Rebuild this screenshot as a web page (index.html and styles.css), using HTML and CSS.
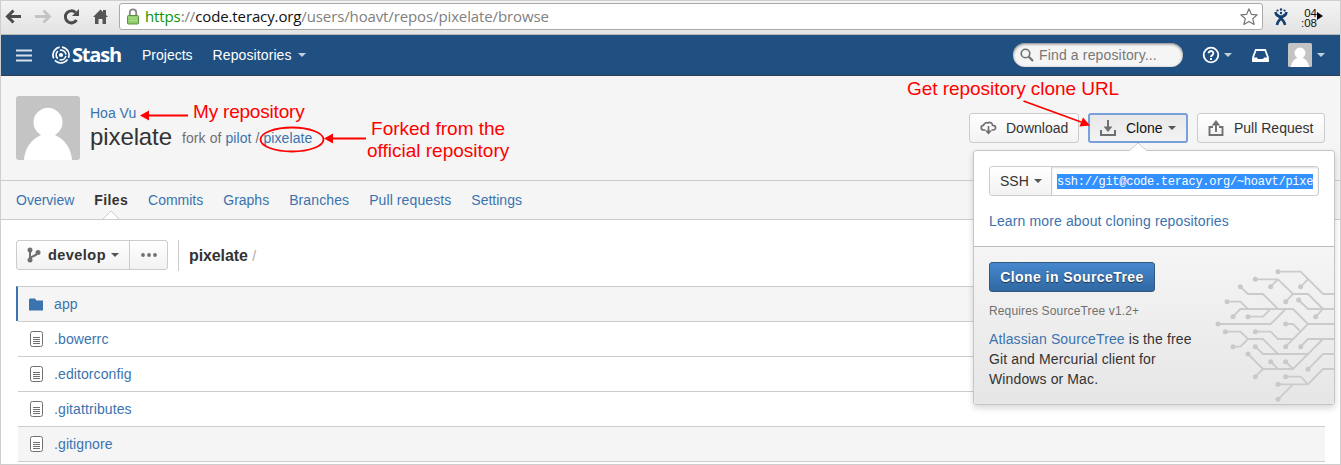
FILE: index.html
```html
<!DOCTYPE html>
<html lang="en">
<head>
<meta charset="utf-8">
<title>pixelate - Stash</title>
<link rel="stylesheet" href="styles.css">
</head>
<body>
<div class="window">
  <div class="toolbar">
    <svg class="nav-icons" width="112" height="34" viewBox="0 0 112 34">
      <path d="M20 15.500H7M12.500 9.500L6.500 15.500L12.500 21.500" fill="none" stroke="#4c4c4c" stroke-width="3"/>
      <path d="M34 15.500h13M42.500 9.500l6 6-6 6" fill="none" stroke="#c3c3c3" stroke-width="2.800"/>
      <path d="M75.500 19a6 6 0 1 1-1-7.500" fill="none" stroke="#4c4c4c" stroke-width="3"/>
      <path d="M78 8v7h-7z" fill="#4c4c4c"/>
      <path d="M92 16L99.500 8.500L102 11V9h3v5l2 2h-2v7h-3.500v-5h-4v5H94v-7z" fill="#555"/>
    </svg>
    <div class="address">
      <svg class="lock" width="12" height="17" viewBox="0 0 12 17">
        <path d="M2.800 8V4.500a3.200 3.200 0 0 1 6.400 0V8" fill="none" stroke="#888" stroke-width="1.800"/>
        <rect x=".5" y="7.500" width="11" height="8.500" rx="1" fill="#8fce6b" stroke="#5c8f43"/>
        <path d="M2 10h8M2 12.500h8" stroke="#aee08f"/>
      </svg>
      <span class="url"><span class="secure">https</span>://<span class="host">code.teracy.org</span>/users/hoavt/repos/pixelate/browse</span>
      <svg class="star" width="20" height="20" viewBox="0 0 20 20"><path d="M10 1.800l2.300 5.500 5.900.5-4.500 3.900 1.400 5.800-5.100-3.100-5.100 3.100 1.400-5.800L1.800 7.800l5.900-.5z" fill="#fff" stroke="#777" stroke-width="1.200" stroke-linejoin="round"/></svg>
    </div>
    <svg class="ext" width="14" height="18" viewBox="0 0 14 18">
      <g fill="#14406f"><circle cx="7" cy="1.500" r="1.200"/><circle cx="3.500" cy="2.500" r="1.100"/><circle cx="10.500" cy="2.500" r="1.100"/><circle cx="7" cy="5" r="1.200"/></g>
      <path d="M1.500 4C2 7 4.500 8.500 7 8.500S12 7 12.500 4M3 17C3.500 12.500 6 11.500 10.500 7M11 17C10.500 12.500 8 11.500 3.500 7" fill="none" stroke="#14406f" stroke-width="2.600"/>
    </svg>
    <div class="timer"><span>04</span><span>:08</span><i></i></div>
  </div>

  <header class="app-header">
    <svg class="menu" width="16" height="13" viewBox="0 0 16 13"><path d="M0 1.500h16M0 6.500h16M0 11.500h16" stroke="#d5dfeb" stroke-width="2"/></svg>
    <svg class="logo" width="18" height="18" viewBox="0 0 18 18" fill="none" stroke="#fff">
      <circle cx="9" cy="9" r="8" stroke-width="1.700" stroke-dasharray="14.500 2.250" transform="rotate(35 9 9)"/>
      <circle cx="9" cy="9" r="4.900" stroke-width="1.600" stroke-dasharray="8.200 2.050" transform="rotate(10 9 9)"/>
      <circle cx="9" cy="9" r="2.100" fill="#fff" stroke="none"/>
    </svg>
    <span class="brand">Stash</span>
    <a class="projects">Projects</a>
    <a class="repos">Repositories</a><i class="caret light"></i>
    <div class="search">
      <svg width="14" height="14" viewBox="0 0 14 14"><circle cx="5.500" cy="5.500" r="4.300" fill="none" stroke="#707070" stroke-width="1.600"/><path d="M8.800 8.800L13 13" stroke="#707070" stroke-width="2.200"/></svg>
      <span>Find a repository...</span>
    </div>
    <svg class="help" width="18" height="18" viewBox="0 0 18 18"><circle cx="9" cy="9" r="7.300" fill="none" stroke="#fff" stroke-width="1.800"/><path d="M6.600 7.300a2.400 2.200 0 1 1 3.700 1.800Q9 9.800 9 11" fill="none" stroke="#fff" stroke-width="1.900"/><rect x="8" y="12" width="2" height="2" fill="#fff"/></svg>
    <i class="caret light"></i>
    <svg class="inbox" width="17" height="13" viewBox="0 0 17 13"><path d="M3.800 1h9.400L16 8.500V12H1V8.500z" fill="none" stroke="#fff" stroke-width="1.800"/><path d="M1 8.500h4l1 1.500h5l1-1.500h4V12H1z" fill="#fff"/></svg>
    <svg class="me" width="24" height="24" viewBox="0 0 64 64"><rect width="64" height="64" rx="4" fill="#c4c4c4"/><path d="M8 64c1-13 8-21 17-25a14.500 14.500 0 1 1 14 0c9 4 16 12 17 25z" fill="#fff"/></svg>
    <i class="caret light"></i>
  </header>

  <section class="repo-header">
    <svg class="avatar" width="64" height="64" viewBox="0 0 64 64"><rect width="64" height="64" rx="3" fill="#c4c4c4"/><path d="M8 64c1-13 8-21 17-25a14.500 14.500 0 1 1 14 0c9 4 16 12 17 25z" fill="#fff"/></svg>
    <div class="identity">
      <a class="owner">Hoa Vu</a>
      <div class="title"><h1>pixelate</h1><span class="fork">fork of <a>pilot</a> / <a>pixelate</a></span></div>
    </div>
    <div class="actions">
      <div class="button download">
        <svg width="17" height="14" viewBox="0 0 17 14" fill="none" stroke="#707070" stroke-width="1.700"><path d="M5.500 9H3.500a2.300 2.300 0 0 1 0-4.600C4 2 6.500 1 8 2c2-1.500 4.500 0 4.500 2.400 4-.2 4 4.600.5 4.600h-1.500M8.500 5v6"/><path d="M5 9.500h7L8.500 13.500z" fill="#707070" stroke="none"/></svg>
        <span>Download</span>
      </div>
      <div class="button clone">
        <svg width="16" height="16" viewBox="0 0 16 16"><path d="M1 10v5h14v-5M8 0v8" fill="none" stroke="#707070" stroke-width="2"/><path d="M3.500 6.500h9L8 12z" fill="#707070"/></svg>
        <span>Clone</span><i class="caret"></i>
        <div class="popup">
          <div class="popup-top">
            <div class="url-group"><div class="protocol">SSH<i class="caret"></i></div><div class="clone-url"><span>ssh://git@code.teracy.org/~hoavt/pixe</span></div></div>
            <a class="learn">Learn more about cloning repositories</a>
          </div>
          <div class="popup-bottom">
            <svg class="circuit" width="124" height="157" viewBox="60 21 372 471">
              <g fill="none" stroke="#cbcbcb" stroke-width="5.500">
                <path d="M264 95H332L399 162H433M332 140L354 118M196 118H264L309 162H354L399 207H433M242 140L264 118M287 185L309 162M151 140L174 162H219L264 207M111 185H151L174 207M129 230L151 207H309L354 252H433M174 230H219L242 207M84 252H242L287 207M326 180L354 207H399L377 230M287 252H309L332 275M287 320L354 252M106 275H151L174 297H219L264 342M129 320H151L174 297M196 275H242L264 297H309M332 320L354 297H433M196 320L219 342H354M174 342L219 387H309L399 297M196 410L219 387M242 365L264 387M287 365L309 387M354 388L399 342H433M287 410H332L354 433M264 433H354L399 387H433M264 478L309 433"/>
              </g>
              <g fill="#c9c9c9"><circle cx="264" cy="95" r="7.500"/><circle cx="332" cy="140" r="7.500"/><circle cx="196" cy="118" r="7.500"/><circle cx="242" cy="140" r="7.500"/><circle cx="287" cy="185" r="7.500"/><circle cx="151" cy="140" r="7.500"/><circle cx="111" cy="185" r="7.500"/><circle cx="129" cy="230" r="7.500"/><circle cx="174" cy="230" r="7.500"/><circle cx="84" cy="252" r="7.500"/><circle cx="326" cy="180" r="7.500"/><circle cx="377" cy="230" r="7.500"/><circle cx="287" cy="252" r="7.500"/><circle cx="287" cy="320" r="7.500"/><circle cx="106" cy="275" r="7.500"/><circle cx="129" cy="320" r="7.500"/><circle cx="196" cy="275" r="7.500"/><circle cx="332" cy="320" r="7.500"/><circle cx="196" cy="320" r="7.500"/><circle cx="174" cy="342" r="7.500"/><circle cx="196" cy="410" r="7.500"/><circle cx="242" cy="365" r="7.500"/><circle cx="287" cy="365" r="7.500"/><circle cx="354" cy="388" r="7.500"/><circle cx="287" cy="410" r="7.500"/><circle cx="264" cy="433" r="7.500"/><circle cx="264" cy="478" r="7.500"/></g>
            </svg>
            <div class="primary">Clone in SourceTree</div>
            <div class="requires">Requires SourceTree v1.2+</div>
            <p><a>Atlassian SourceTree</a> is the free<br>Git and Mercurial client for<br>Windows or Mac.</p>
          </div>
          <svg class="pointer" width="18" height="9" viewBox="0 0 18 9"><path d="M0 9L9 1l9 8" fill="#fff" stroke="#ccc"/></svg>
        </div>
      </div>
      <div class="button pull">
        <svg width="17" height="16" viewBox="0 0 17 16"><path d="M5 7H1.500v8h13V7H11M8 12V4" fill="none" stroke="#707070" stroke-width="1.900"/><path d="M3.700 5.500L8 0l4.300 5.500z" fill="#707070"/></svg>
        <span>Pull Request</span>
      </div>
    </div>
  </section>

  <nav class="tabs">
    <a>Overview</a><a class="active">Files<svg width="18" height="9" viewBox="0 0 18 9"><path d="M1 9l8-8 8 8" fill="#fff" stroke="#ccc"/></svg></a><a>Commits</a><a>Graphs</a><a class="wide">Branches</a><a class="wide">Pull requests</a><a>Settings</a>
  </nav>

  <main>
    <div class="path-bar">
      <div class="branch">
        <div class="branch-name">
          <svg width="14" height="16" viewBox="0 0 14 16" fill="none" stroke="#707070" stroke-width="2"><path d="M3 3v10M3 12c1-4 7-2 8-7" /><g fill="#707070" stroke="none"><circle cx="3" cy="3" r="2.500"/><circle cx="3" cy="13" r="2.500"/><circle cx="11" cy="5.500" r="2.500"/></g></svg>
          <b>develop</b><i class="caret"></i>
        </div>
        <div class="more"><svg width="16" height="4" viewBox="0 0 16 4" fill="#707070"><circle cx="2" cy="2" r="1.900"/><circle cx="8" cy="2" r="1.900"/><circle cx="14" cy="2" r="1.900"/></svg></div>
      </div>
      <div class="crumbs"><b>pixelate</b> <span>/</span></div>
    </div>
    <div class="files">
      <div class="row focused"><svg width="14" height="13" viewBox="0 0 14 13"><path d="M0 12.500V1.500L1 .5h5l1.500 2H14v10z" fill="#3b73af"/></svg><a>app</a></div>
      <div class="row"><svg width="13" height="16" viewBox="0 0 13 16"><rect x=".5" y=".5" width="12" height="15" rx="2" fill="#fff" stroke="#707070"/><path d="M3 6.500h7M3 8.500h7M3 10.500h7M3 12.500h7" stroke="#707070"/></svg><a>.bowerrc</a></div>
      <div class="row"><svg width="13" height="16" viewBox="0 0 13 16"><rect x=".5" y=".5" width="12" height="15" rx="2" fill="#fff" stroke="#707070"/><path d="M3 6.500h7M3 8.500h7M3 10.500h7M3 12.500h7" stroke="#707070"/></svg><a>.editorconfig</a></div>
      <div class="row"><svg width="13" height="16" viewBox="0 0 13 16"><rect x=".5" y=".5" width="12" height="15" rx="2" fill="#fff" stroke="#707070"/><path d="M3 6.500h7M3 8.500h7M3 10.500h7M3 12.500h7" stroke="#707070"/></svg><a>.gitattributes</a></div>
      <div class="row hover"><svg width="13" height="16" viewBox="0 0 13 16"><rect x=".5" y=".5" width="12" height="15" rx="2" fill="#fff" stroke="#707070"/><path d="M3 6.500h7M3 8.500h7M3 10.500h7M3 12.500h7" stroke="#707070"/></svg><a>.gitignore</a></div>
    </div>
  </main>

  <svg class="arrows" width="1341" height="465" viewBox="0 0 1341 465">
    <g fill="none" stroke="#f00" stroke-width="1.800"><path d="M148 115.500h40M330 138.500h36M1023.500 101L1081 122"/><ellipse cx="292" cy="139.500" rx="31.500" ry="12"/></g>
    <path d="M140 115.500l9-5v10zM324 138.500l9-5v10zM1090 125.500l-10.500 1 3.500-9z" fill="#f00"/>
  </svg>
  <div class="note note-mine">My repository</div>
  <div class="note note-fork">Forked from the<br>official repository</div>
  <div class="note note-clone">Get repository clone URL</div>
</div>
</body>
</html>
```
FILE: styles.css
```css
* { box-sizing: border-box; }
body { margin: 0; font: 14px/20px "Liberation Sans", Arial, sans-serif; color: #333; }
svg { display: block; flex: none; }
a { color: #3b73af; }
.window { position: relative; width: 1341px; height: 465px; border: 1px solid #cecece; background: #fff; overflow: hidden; }

.toolbar { height: 34px; display: flex; align-items: flex-start; background: linear-gradient(#f3f3f3, #e3e3e3); border-bottom: 1px solid #b9b9b9; }
.nav-icons { margin-right: 6px; }
.address { width: 1144px; height: 27px; margin-top: 2px; border: 1px solid #aaa; border-radius: 3px; background: #fff; display: flex; align-items: center; padding-left: 7px; }
.lock { margin-right: 6px; }
.url { font-family: "Open Sans", "Noto Sans", sans-serif; font-size: 15px; letter-spacing: -.12px; white-space: nowrap; color: #808080; margin-top: -1px; }
.secure { color: #0a930a; }
.host { color: #111; }
.star { margin-left: auto; margin-right: 3px; }
.ext { margin: 7px 0 0 11px; }
.timer { position: relative; margin: 7px 0 0 16px; width: 22px; font-size: 11.5px; line-height: 10px; color: #111; display: flex; flex-direction: column; }
.timer span { width: 13px; display: flex; justify-content: flex-end; }
.timer i { position: absolute; left: 13px; top: 4px; border: 4px solid transparent; border-left: 6px solid #000; border-right: 0; }

.app-header { height: 41px; background: #205081; border-bottom: 1px solid #2e3d54; display: flex; align-items: center; padding-left: 15px; color: #fff; white-space: nowrap; }
.app-header a { color: #fff; }
.logo { margin-left: 20px; }
.brand { font: bold 20px/24px "Open Sans", sans-serif; letter-spacing: -1.2px; width: 50px; margin-left: 2px; }
.projects { margin-left: 20px; }
.repos { margin-left: 20px; letter-spacing: .1px; }
.caret { width: 0; height: 0; border: 4px solid transparent; border-top-color: #555; border-bottom: 0; flex: none; }
.caret.light { border-top-color: #c3d0df; margin-left: 6px; }
.search { margin-left: auto; width: 170px; height: 24px; border-radius: 12px; background: #f5f5f5; box-shadow: inset 0 1px 3px #777; color: #777; display: flex; align-items: center; gap: 5px; padding-left: 7px; letter-spacing: .15px; }
.help { margin-left: 19px; }
.help + .caret { margin-left: 4px; }
.inbox { margin-left: 20px; }
.me { margin-left: 19px; }
.me + .caret { margin-left: 5px; margin-right: 15px; }

.repo-header { height: 105px; background: #f5f5f5; border-bottom: 1px solid #ccc; display: flex; align-items: flex-start; padding: 20px 15px 0 15px; }
.identity { margin-left: 10px; padding-top: 7px; }
.owner { display: block; }
.title { display: flex; align-items: center; margin-top: -1px; }
h1 { margin: 0; font-weight: normal; font-size: 24px; line-height: 30px; width: 92px; letter-spacing: -.1px; }
.fork { color: #707070; padding-top: 1px; letter-spacing: .08px; }
.actions { margin: 17px 0 0 auto; display: flex; }
.button { height: 30px; border: 1px solid #ccc; border-radius: 3px; background: linear-gradient(#fff, #f2f2f2); display: flex; align-items: center; position: relative; white-space: nowrap; }
.download { width: 110px; padding-left: 10px; gap: 9px; margin-right: 9px; }
.clone { width: 100px; padding-left: 10px; gap: 10px; border: 2px solid #78a1dc; margin-right: 9px; background: linear-gradient(#e8e8e8, #f3f3f3); color: #111; }
.clone > .caret { margin-left: -5px; }
.pull { width: 128px; padding-left: 10px; gap: 9px; }

.popup { position: absolute; z-index: 2; left: -117px; top: 35px; width: 362px; height: 255px; border: 1px solid #c6c6c6; border-radius: 3px; background: #fff; box-shadow: 0 3px 6px rgba(0,0,0,.16); color: #333; }
.pointer { position: absolute; left: 155px; top: -9px; }
.popup-top { height: 95px; padding: 15px 15px 0; }
.url-group { display: flex; height: 30px; border: 1px solid #ccc; border-radius: 3px; margin-bottom: 15px; }
.protocol { width: 62px; border-right: 1px solid #ccc; background: linear-gradient(#fff, #f2f2f2); display: flex; align-items: center; gap: 5px; padding-left: 10px; border-radius: 3px 0 0 3px; }
.learn { letter-spacing: .13px; }
.clone-url { flex: 1; min-width: 0; padding: 7px 5px; box-shadow: inset 0 1px 2px #ddd; }
.clone-url span { display: block; height: 15px; background: #3390ff; color: #fff; font: 12px/16px "Liberation Mono", "Courier New", monospace; letter-spacing: -.28px; }
.popup-bottom { height: 158px; border-top: 1px solid #bbb; padding: 15px; background: linear-gradient(#f5f5f5, #e6e6e6); position: relative; border-radius: 0 0 3px 3px; }
.circuit { position: absolute; right: 0; top: 0; }
.primary { width: 166px; height: 30px; border: 1px solid #33587f; border-radius: 3px; background: linear-gradient(#4687ce, #3068a2); color: #fff; font-weight: bold; line-height: 28px; text-align: center; letter-spacing: .43px; text-shadow: 0 1px 1px #234; }
.requires { font-size: 12px; line-height: 18px; color: #707070; margin-top: 10px; letter-spacing: .14px; }
.popup-bottom p { margin: 9px 0 0; letter-spacing: .12px; }

.tabs { height: 39px; background: #f5f5f5; border-bottom: 1px solid #ccc; display: flex; gap: 20px; padding: 9px 15px 0; }
.tabs .wide { letter-spacing: .1px; }
.tabs .active { position: relative; color: #333; font-weight: bold; letter-spacing: .35px; }
.active svg { position: absolute; bottom: 0; left: 8px; }

main { padding: 20px 15px 0; }
.path-bar { display: flex; height: 46px; align-items: flex-start; }
.branch { display: flex; width: 152px; height: 30px; border: 1px solid #ccc; border-radius: 3px; background: linear-gradient(#fff, #f2f2f2); }
.branch-name { width: 113px; border-right: 1px solid #ccc; display: flex; align-items: center; padding-left: 10px; gap: 7px; }
.branch-name b { width: 59px; font-size: 14.5px; letter-spacing: .45px; }
.branch-name .caret { margin-left: -3px; }
.more { flex: 1; display: grid; place-items: center; }
.crumbs { height: 31px; line-height: 31px; margin-left: 10px; border-left: 1px solid #ccc; padding-left: 10px; font-size: 16px; color: #aaa; }
.crumbs b { color: #333; letter-spacing: -.1px; }
.crumbs span { font-size: 14px; }
.row { height: 35px; border-top: 1px solid #ccc; display: flex; align-items: center; gap: 11px; padding-left: 12px; margin-left: 2px; letter-spacing: .1px; }
.row:last-child { height: 36px; border-bottom: 1px solid #ccc; }
.focused { margin-left: 0; border-left: 2px solid #3b73af; padding-left: 11px; background: #f5f5f5; }
.hover { background: #f5f5f5; }

.arrows { position: absolute; left: -1px; top: -1px; z-index: 3; pointer-events: none; }
.note { position: absolute; z-index: 3; color: #f00; font-size: 19px; line-height: 22px; white-space: nowrap; }
.note-mine { left: 192px; top: 100px; letter-spacing: -.2px; }
.note-fork { left: 366px; top: 117px; text-align: center; }
.note-clone { left: 906px; top: 77px; letter-spacing: -.05px; }
```
